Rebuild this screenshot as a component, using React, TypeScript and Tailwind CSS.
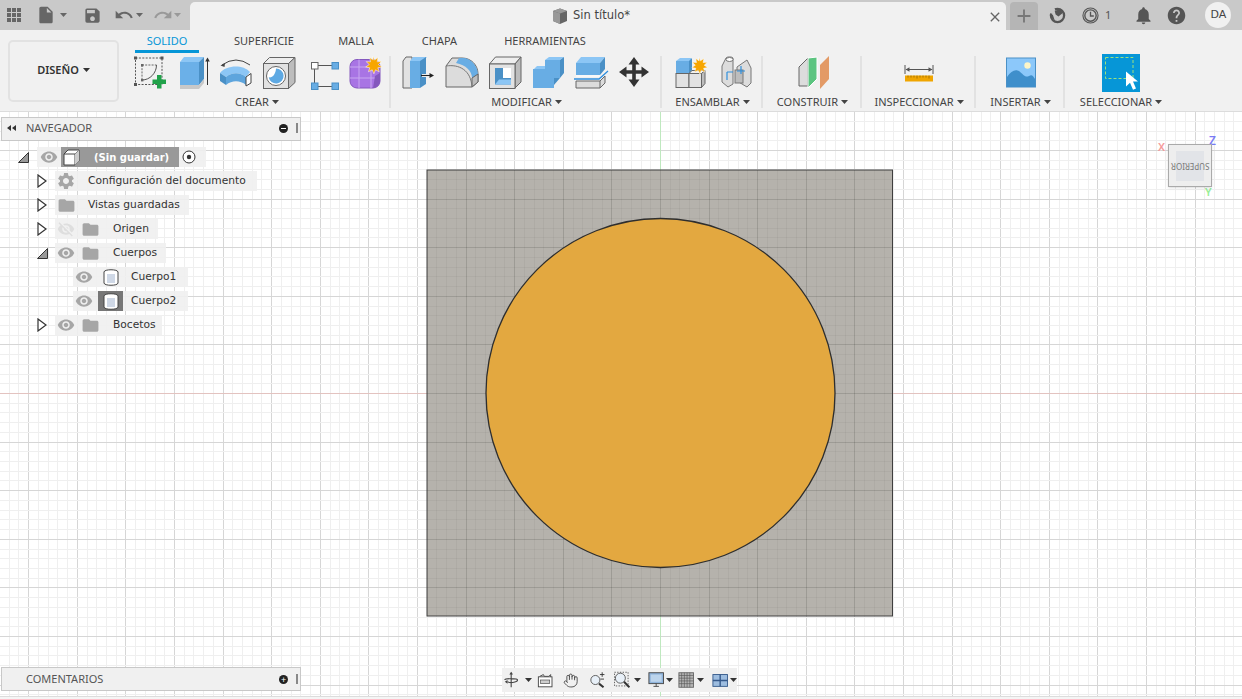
import type { ReactNode } from 'react'
import { Hand } from 'lucide-react'
import {
  MdAdd, MdClose, MdFolder, MdHelp, MdInsertDriveFile, MdNotifications, MdRedo, MdSave, MdSettings, MdUndo, MdVisibility, MdVisibilityOff,
} from 'react-icons/md'

const UI_FONT = 'font-["Noto_Sans",sans-serif]'
const TREE_FONT = 'font-["DejaVu_Sans",sans-serif]'

const CX = 660
const CY = 281 // axis origin inside the canvas (393 - 112)
const STEP = 9.72

function linesFrom(center: number, max: number) {
  const out: { pos: number; major: boolean }[] = []
  const first = -Math.ceil(center / STEP)
  const last = Math.ceil((max - center) / STEP)
  for (let i = first; i <= last; i++) {
    out.push({ pos: Math.round(center + i * STEP) + 0.5, major: i % 5 === 0 })
  }
  return out
}

function Canvas() {
  const xs = linesFrom(CX, 1242)
  const ys = linesFrom(CY, 584)
  return (
    <svg viewBox="0 0 1242 584" className="block w-full h-[584px]">
      <rect width="1242" height="584" fill="#ffffff" />
      {xs.map((l) => <line key={`x${l.pos}`} x1={l.pos} x2={l.pos} y1={0} y2={584} stroke={l.major ? '#d6d6d6' : '#efefef'} />)}
      {ys.map((l) => <line key={`y${l.pos}`} y1={l.pos} y2={l.pos} x1={0} x2={1242} stroke={l.major ? '#d6d6d6' : '#efefef'} />)}
      <line x1={0} x2={1242} y1={281.5} y2={281.5} stroke="#e3c3c0" />
      <line x1={660.5} x2={660.5} y1={0} y2={584} stroke="#bfe8bf" />
      <rect x={427} y={58} width={465.5} height={446} fill="#b5b2ac" />
      {xs.filter((l) => l.pos > 427 && l.pos < 892).map((l) => (
        <line key={`mx${l.pos}`} x1={l.pos} x2={l.pos} y1={58} y2={504} stroke="#000" strokeOpacity={l.major ? 0.13 : 0.035} />
      ))}
      {ys.filter((l) => l.pos > 58 && l.pos < 504).map((l) => (
        <line key={`my${l.pos}`} y1={l.pos} y2={l.pos} x1={427} x2={892} stroke="#000" strokeOpacity={l.major ? 0.13 : 0.035} />
      ))}
      <rect x={427} y={58} width={465.5} height={446} fill="none" stroke="#3f3f3f" />
      <circle cx={660.5} cy={281} r={174.5} fill="#e3a840" stroke="#2e2e2e" strokeWidth={1.3} />
    </svg>
  )
}

function Caret({ className = 'fill-[#444]' }: { className?: string }) {
  return <svg viewBox="0 0 7 4" className={`w-[7px] h-[4px] shrink-0 ${className}`}><path d="M0 0h7L3.5 4z" /></svg>
}

function Ico({ children, w = 36 }: { children: ReactNode; w?: number }) {
  return <svg viewBox={`0 0 ${w} ${w}`} width={w} height={w} className="shrink-0 block overflow-visible">{children}</svg>
}

function SketchIcon() {
  return (
    <Ico>
      <rect x="3.5" y="4" width="26.5" height="26.5" fill="none" stroke="#555" strokeDasharray="2 1.4" />
      {[[3.5, 4], [30, 4], [3.5, 30.5]].map(([x, y]) => <rect key={`${x}${y}`} x={x - 1.5} y={y - 1.5} width="3" height="3" fill="#555" />)}
      <path d="M10 11h14.5M10 11v15" stroke="#666" strokeDasharray="2 1.2" fill="none" />
      <path d="M24.5 11C24.5 19 18 26 10 26" stroke="#555" fill="none" />
      <rect x="9" y="10" width="2.4" height="2.4" fill="#666" />
      <rect x="9" y="25" width="2.4" height="2.4" fill="#666" />
      <path d="M25 21h4.5v4.5H34V30h-4.500v4.500H25V30h-4.500v-4.500H25z" fill="#21a24a" />
    </Ico>
  )
}

function ExtrudeIcon() {
  return (
    <Ico>
      <path d="M5 8l4-5h20l-5 5z" fill="#8cc6f5" />
      <rect x="5" y="8" width="19" height="23" fill="#6bb0e8" />
      <path d="M24 8l5-5v22l-5 6z" fill="#4a90c6" />
      <path d="M5 31h19l5-6v4l-5 6H5z" fill="#c8c8c8" />
      <path d="M32.500 31V6" stroke="#333" strokeWidth="1" />
      <path d="M32.500 3.500l2.300 4h-4.600z" fill="#333" />
    </Ico>
  )
}

function RevolveIcon() {
  return (
    <Ico>
      <path d="M4 11Q18 1 32 11" stroke="#444" fill="none" />
      <path d="M2.500 11.500l4.500-2.500-.5 4z" fill="#444" />
      <path d="M2 19C8 11 25 10 32 18L28 23C22 18 14 18 8 23Z" fill="#8cc6f5" />
      <path d="M2 19L8 23L8 31L2 27Z" fill="#4a90c6" />
      <path d="M8 23C14 18 22 18 28 23L28 31C22 26 14 26 8 31Z" fill="#5ea5dd" />
      <path d="M28 23L33 19.500V29L28 32Z" fill="#fff" stroke="#444" />
    </Ico>
  )
}

function HoleIcon() {
  return (
    <Ico>
      <path d="M2.500 9.500l6-6H34l-6.500 6z" fill="#eeeeee" stroke="#666" />
      <path d="M27.500 9.500L34 3.500v25l-6.500 6z" fill="#bdbdbd" stroke="#666" />
      <rect x="2.500" y="9.500" width="25" height="25" fill="#e2e2e2" stroke="#666" />
      <circle cx="15" cy="22" r="9.500" fill="#fff" stroke="#666" />
      <path d="M15 14.500a7.500 7.500 0 1 1-7.300 8.800c3.500 1 7-3 7.300-8.800z" fill="#5ea9e3" />
    </Ico>
  )
}

function PatternIcon() {
  return (
    <Ico>
      <path d="M14 11.500h14M10.500 15v14M14 32.500h14" stroke="#555" fill="none" />
      <rect x="7.500" y="8.500" width="6.500" height="6.500" fill="#fff" stroke="#666" />
      <rect x="28" y="8.500" width="6.500" height="6.500" fill="#68ade4" stroke="#4a90c6" />
      <rect x="7.500" y="29" width="6.500" height="6.500" fill="#68ade4" stroke="#4a90c6" />
      <rect x="28" y="29" width="6.500" height="6.500" fill="#68ade4" stroke="#4a90c6" />
    </Ico>
  )
}

function FormIcon() {
  return (
    <Ico>
      <rect x="3" y="5.500" width="30" height="28.500" rx="7" fill="#a874e4" stroke="#8458bd" />
      <path d="M3 13h30M3 24h30M12 5.500V34M24 13v21" stroke="#c9a8f1" fill="none" />
      <path d="M28 22l5-3v8c0 3-3 7-7 7z" fill="#8458bd" />
      <path d="M26 2l1.600 4 3.400-2.400-.8 4.200 4.300-.2-3.100 3 3.600 2.400-4.200.800 1.500 4-3.800-2-1.600 4-1.700-4-3.800 2 1.400-4-4.100-.8 3.500-2.400-3-3 4.300.2-.8-4.200 3.400 2.400z" fill="#f7a600" stroke="#fff" strokeWidth=".5" />
    </Ico>
  )
}

function PressPullIcon() {
  return (
    <Ico>
      <path d="M2 34V7l3-4h6v31z" fill="#e2e2e2" stroke="#666" />
      <path d="M9 7l3-4h14l-4 4z" fill="#8cc6f5" />
      <rect x="9" y="7" width="10" height="27" fill="#68ade4" />
      <path d="M19 7l6-4v27l-6 4z" fill="#4a90c6" />
      <path d="M21 21.500h8" stroke="#fff" strokeWidth="3" />
      <path d="M20 21.500h9" stroke="#222" strokeWidth="1.200" />
      <path d="M33 21.500l-4.500-2.600v5.200z" fill="#222" />
    </Ico>
  )
}

function FilletIcon() {
  return (
    <Ico>
      <path d="M2 33V12l6-8h10C27 4 34 11 34 20v8l-6 5z" fill="#dcdcdc" stroke="#666" />
      <path d="M15 4h4C27 4 34 12 34 21l-6 3C28 17 22 11 12 9z" fill="#68ade4" />
      <path d="M28 24l6-4v8l-6 5z" fill="#bdbdbd" stroke="#666" />
      <path d="M2 12C15 10 27 16 28 33" fill="none" stroke="#777" />
    </Ico>
  )
}

function ShellIcon() {
  return (
    <Ico>
      <path d="M2.500 10l6-7H34l-6 7z" fill="#eeeeee" stroke="#666" />
      <path d="M28 10l6-7v25l-6 6z" fill="#bdbdbd" stroke="#666" />
      <rect x="2.500" y="10" width="25.500" height="24.500" fill="#e2e2e2" stroke="#666" />
      <path d="M8 14h8v10h8v6.500H8z" fill="#4a90c6" />
      <path d="M16 14h8v10h-8z" fill="#fff" />
      <path d="M8 30.500l4-5h12v5z" fill="#8cc6f5" />
    </Ico>
  )
}

function CombineIcon() {
  return (
    <Ico>
      <path d="M3 16l4-4h9v11h-13z" fill="#8cc6f5" />
      <rect x="3" y="15" width="21" height="19" fill="#68ade4" />
      <path d="M15 6l4-3h15l-4 3z" fill="#8cc6f5" />
      <rect x="15" y="6" width="15" height="18" fill="#68ade4" />
      <path d="M30 6l4-3v16l-4 5zM24 24h6l-6 7z" fill="#4a90c6" />
      <path d="M24 24l-6 0v10l6-3z" fill="#68ade4" />
    </Ico>
  )
}

function SplitIcon() {
  return (
    <Ico>
      <path d="M3 9l5-6h24l-5 6z" fill="#8cc6f5" />
      <rect x="3" y="9" width="24" height="12" fill="#68ade4" />
      <path d="M27 9l5-6v12l-5 6z" fill="#4a90c6" />
      <path d="M1 25h25L35 17" stroke="#2f8fdd" strokeWidth="1.300" fill="none" />
      <path d="M3 27h24l5-5v7l-5 5H3z" fill="#dcdcdc" stroke="#666" />
      <path d="M27 27v7" stroke="#666" />
      <path d="M3 22h24" stroke="#fff" strokeWidth="1" />
    </Ico>
  )
}

function MoveIcon() {
  return (
    <Ico>
      <path d="M18 3l5.500 7.500h-3.700v5.700h5.700v-3.700L33 18l-7.500 5.500v-3.700h-5.700v5.700h3.700L18 33l-5.500-7.500h3.700v-5.700h-5.700v3.700L3 18l7.500-5.500v3.700h5.700v-5.700h-3.700z" fill="#333" />
    </Ico>
  )
}

function AssembleIcon() {
  return (
    <Ico>
      <path d="M3 7l4-3h11v15H3z" fill="#8cc6f5" />
      <rect x="3" y="7" width="13" height="12" fill="#68ade4" />
      <path d="M16 7l3-3v13l-3 3z" fill="#4a90c6" />
      <rect x="3" y="19.500" width="13" height="14" fill="#e2e2e2" stroke="#666" />
      <rect x="16" y="19.500" width="12.500" height="14" fill="#e2e2e2" stroke="#666" />
      <path d="M16 19.500l3-3h13l-3.500 3z" fill="#f0f0f0" stroke="#666" />
      <path d="M28.500 19.500l3.500-3v13l-3.500 4z" fill="#bdbdbd" stroke="#666" />
      <path d="M26 3l1.500 3.800 3.400-2.300-.8 4 4.200-.2-3.100 2.900 3.500 2.300-4.100.8 1.400 3.900-3.700-2-1.400 3.900-1.700-3.900-3.600 2 1.200-3.900-4-.8 3.500-2.300-3-2.900 4.200.2-.8-4 3.400 2.300z" fill="#f7a600" stroke="#fff" strokeWidth=".5" />
    </Ico>
  )
}

function JointIcon() {
  return (
    <Ico>
      <path d="M5 12l4-8c1-1.500 6-1.500 7 0v26l-5 3-6-5z" fill="#dcdcdc" stroke="#777" />
      <ellipse cx="12.500" cy="5.500" rx="3.500" ry="2" fill="#fff" stroke="#777" />
      <path d="M20 13l10-7 4 8v15l-4 4-10-6z" fill="#dcdcdc" stroke="#777" />
      <rect x="18" y="16" width="8" height="13" fill="#bdbdbd" stroke="#777" />
      <path d="M10 18v8M10 18h6M24 12v8M20 17h8" stroke="#2f8fdd" strokeWidth="1.200" fill="none" />
    </Ico>
  )
}

function ConstructIcon() {
  return (
    <Ico>
      <g transform="translate(3)">
        <path d="M1 13l9-9v28H1z" fill="#dcdcdc" stroke="#666" />
        <path d="M10 4l9-1v22l-9 9z" fill="#5cc480" stroke="#fff" />
        <path d="M22 11l9-9v23l-9 10z" fill="#e39a66" />
      </g>
    </Ico>
  )
}

function InspectIcon() {
  return (
    <Ico>
      <path d="M4 11v9M32 11v9" stroke="#555" />
      <path d="M5 15.500h26" stroke="#555" />
      <path d="M4.500 15.500l4-2.200v4.400zM31.500 15.500l-4-2.200v4.400z" fill="#555" />
      <rect x="4" y="21.500" width="28" height="6" fill="#f0a500" />
      <path d="M7 21.500v2M10 21.500v2M13 21.500v2M16 21.500v3M19 21.500v2M22 21.500v2M25 21.500v2M28 21.500v3" stroke="#8a6000" strokeWidth=".7" />
    </Ico>
  )
}

function InsertIcon() {
  return (
    <Ico>
      <rect x="3.500" y="4" width="29" height="29" fill="#8cc8fa" stroke="#4a90c6" />
      <path d="M4 33V23c4-6 8-8 12-6 4 3 6 7 10 5 3-2 4 0 6 3v8z" fill="#3f8fcb" />
      <circle cx="24.500" cy="11.500" r="3.200" fill="#fdf5c8" />
    </Ico>
  )
}

function SelectIcon() {
  return (
    <Ico w={38}>
      <rect width="38" height="38" fill="#0696d7" />
      <rect x="3.500" y="3.500" width="27.500" height="21" fill="none" stroke="#9ee27c" strokeDasharray="3 2" />
      <path d="M24 17.500v15l4-3.700 3 7 3-1.200-3-7h5z" fill="#fff" />
    </Ico>
  )
}

const GROUPS: { label: string; width: string; gap: string; icons: ReactNode[] }[] = [
  { label: 'CREAR', width: 'w-[268px]', gap: 'gap-[7px]', icons: [<SketchIcon key="a" />, <ExtrudeIcon key="b" />, <RevolveIcon key="c" />, <HoleIcon key="d" />, <PatternIcon key="e" />, <FormIcon key="f" />] },
  { label: 'MODIFICAR', width: 'w-[271px]', gap: 'gap-[7px]', icons: [<PressPullIcon key="a" />, <FilletIcon key="b" />, <ShellIcon key="c" />, <CombineIcon key="d" />, <SplitIcon key="e" />, <MoveIcon key="f" />] },
  { label: 'ENSAMBLAR', width: 'w-[101px]', gap: 'gap-[8px]', icons: [<AssembleIcon key="a" />, <JointIcon key="b" />] },
  { label: 'CONSTRUIR', width: 'w-[99px]', gap: 'gap-0', icons: [<ConstructIcon key="a" />] },
  { label: 'INSPECCIONAR', width: 'w-[114px]', gap: 'gap-0', icons: [<InspectIcon key="a" />] },
  { label: 'INSERTAR', width: 'w-[89px]', gap: 'gap-0', icons: [<InsertIcon key="a" />] },
  { label: 'SELECCIONAR', width: 'w-[112px]', gap: 'gap-0', icons: [<SelectIcon key="a" />] },
]

const TABS = [
  { label: 'SOLIDO', active: true, cls: 'w-[64px] ml-[12px]' },
  { label: 'SUPERFICIE', cls: 'w-[58px] ml-[36px]' },
  { label: 'MALLA', cls: 'w-[36px] ml-[45px]' },
  { label: 'CHAPA', cls: 'w-[37px] ml-[47px]' },
  { label: 'HERRAMIENTAS', cls: 'w-[82px] ml-[46px]' },
]

function TopBar() {
  return (
    <div className="h-[30px] bg-[#c9c9c9] flex">
      <div className="w-[190px] shrink-0 flex items-center text-[#666]">
        <svg viewBox="0 0 14 14" className="w-[14px] h-[14px] ml-[7px] fill-[#666]">
          {[0, 5, 10].map((x) => [0, 5, 10].map((y) => <rect key={`${x}-${y}`} x={x} y={y} width="4" height="4" />))}
        </svg>
        <MdInsertDriveFile className="w-[20px] h-[20px] ml-[15px]" />
        <Caret className="fill-[#666] ml-[4px]" />
        <MdSave className="w-[19px] h-[19px] ml-[16px]" />
        <MdUndo className="w-[20px] h-[20px] ml-[12px]" />
        <Caret className="fill-[#666] ml-[2px]" />
        <MdRedo className="w-[20px] h-[20px] ml-[10px] text-[#999]" />
        <Caret className="fill-[#999] ml-[1px]" />
      </div>
      <div className="mt-[2px] w-[816px] shrink-0 bg-[#f1f1f1] rounded-t-[5px] flex items-center justify-center pr-[14px] relative">
        <svg viewBox="0 0 16 16" className="w-[16px] h-[16px] mr-[5px]">
          <path d="M1 3l7-2.500L15 3v10l-7 3-7-3z" fill="#666" />
          <path d="M1 3l7 2.500L15 3 8 .5z" fill="#999" />
          <path d="M1 3l7 2.500V16l-7-3z" fill="#999" />
        </svg>
        <span className={`${TREE_FONT} text-[11.5px] text-[#444]`}>Sin título*</span>
        <MdClose className="absolute right-[3px] top-[7px] w-[16px] h-[16px] text-[#666]" />
      </div>
      <div className="mt-[2px] ml-[4px] w-[28px] shrink-0 bg-[#b5b5b5] rounded-t-[4px] flex items-center justify-center">
        <MdAdd className="w-[22px] h-[22px] text-[#777]" />
      </div>
      <div className="flex items-center text-[#555]">
        <svg viewBox="0 0 18 18" className="w-[17px] h-[17px] ml-[11px]">
          <circle cx="9" cy="9" r="7" fill="none" stroke="#555" strokeWidth="2.400" strokeDasharray="24 6" />
          <path d="M6 4l7-2 1 5-4 3-3-2zM1 10l3-2 2 6z" fill="#555" />
        </svg>
        <svg viewBox="0 0 18 18" className="w-[17px] h-[17px] ml-[16px]">
          <circle cx="9" cy="9" r="8" fill="#c9c9c9" stroke="#555" strokeWidth="1.200" />
          <circle cx="9" cy="9" r="6" fill="none" stroke="#555" strokeWidth="1.500" />
          <path d="M9 5v4.500h3.500" fill="none" stroke="#555" strokeWidth="1.400" />
        </svg>
        <span className={`${UI_FONT} text-[11px] ml-[6px] mr-[22px]`}>1</span>
        <MdNotifications className="w-[21px] h-[21px]" />
        <MdHelp className="w-[21px] h-[21px] ml-[12px]" />
        <span className={`${TREE_FONT} ml-[18px] w-[26px] h-[26px] rounded-full bg-[#f0f0f0] flex items-center justify-center text-[11px] text-[#444]`}>DA</span>
      </div>
    </div>
  )
}

function Toolbar() {
  return (
    <div className={`${UI_FONT} h-[82px] bg-[#f1f1f1] border-b border-[#dcdcdc] flex`}>
      <div className="w-[123px] shrink-0 pl-[8px] pt-[10px]">
        <button className="w-[111px] h-[62px] pb-[2px] rounded-[5px] border-2 border-[#e2e2e2] flex items-center justify-center gap-[4px] text-[11px] font-semibold text-[#333]">
          DISEÑO <Caret className="fill-[#333]" />
        </button>
      </div>
      <div className="flex flex-col">
        <div className="h-[24px] flex text-[11px] text-[#444]">
          {TABS.map((t) => (
            <div key={t.label} className={`${t.cls} h-[23px] flex justify-center pt-[3px] leading-[16px] whitespace-nowrap ${t.active ? 'text-[#0696d7] border-b-[3px] border-[#0696d7]' : ''}`}>
              {t.label}
            </div>
          ))}
        </div>
        <div className="flex">
          {GROUPS.map((g, i) => (
            <div key={g.label} className={`${g.width} h-[57px] flex flex-col items-center relative`}>
              <div className={`h-[36px] flex ${g.gap}`}>{g.icons}</div>
              <div className="mt-[6px] h-[12px] flex items-center gap-[3px] text-[11px] text-[#444] leading-[12px] whitespace-nowrap">
                {g.label} <Caret />
              </div>
              {i < GROUPS.length - 1 && <div className="absolute right-0 top-[2px] w-[2px] h-[52px] bg-[#e2e2e2]" />}
            </div>
          ))}
        </div>
      </div>
    </div>
  )
}

function Closed() {
  return (
    <svg viewBox="0 0 10 14" className="w-[10px] h-[14px] shrink-0">
      <path d="M1 1l8 6-8 6z" fill="#fff" stroke="#333" strokeWidth="1.200" />
    </svg>
  )
}

function Open() {
  return (
    <svg viewBox="0 0 11 11" className="w-[11px] h-[11px] shrink-0">
      <path d="M10.500.5v10H.5z" fill="#999" stroke="#333" />
    </svg>
  )
}

function BodyIcon({ selected }: { selected?: boolean }) {
  return (
    <div className={`w-[25px] h-[20px] flex items-center justify-center ${selected ? 'bg-[#777]' : ''}`}>
      <svg viewBox="0 0 16 17" className="w-[16px] h-[17px]">
        <path d="M1 3c0-3 14-3 14 0v11c0 3-14 3-14 0z" fill="#fff" stroke="#444" />
        <path d="M4 5h8v9H4z" fill="#cfd8e6" />
      </svg>
    </div>
  )
}

const Eye = () => <MdVisibility className="w-[18px] h-[18px] text-[#a6a6a6] shrink-0" />
const Folder = () => <MdFolder className="w-[19px] h-[19px] text-[#a6a6a6] shrink-0" />

function Row({ indent, toggle, bg, children }: { indent: string; toggle: ReactNode; bg: string; children: ReactNode }) {
  return (
    <div className={`h-[24px] flex items-center ${indent}`}>
      <div className="w-[18px] shrink-0">{toggle}</div>
      <div className={`${bg} h-[20px] flex items-center bg-[#f0f0f0]/90 text-[10.7px] text-[#333] whitespace-nowrap`}>{children}</div>
    </div>
  )
}

function Browser() {
  return (
    <div className={`${TREE_FONT} absolute left-0 top-[5px] w-[301px]`}>
      <div className={`${UI_FONT} ml-px h-[24px] pb-[2px] border border-[#c8c8c8] bg-[#f0f0f0] flex items-center text-[11px] text-[#555]`}>
        <svg viewBox="0 0 9 6" className="w-[9px] h-[6px] ml-[5px] fill-[#333]"><path d="M4 0v6L0 3zM9 0v6L5 3z" /></svg>
        <span className="ml-[10px] flex-1">NAVEGADOR</span>
        <span className="w-[9px] h-[9px] rounded-full bg-[#222] flex items-center justify-center mr-[8px]"><span className="w-[5px] h-px bg-white" /></span>
        <span className="w-[2px] h-[10px] border-x border-[#888] mr-[2px]" />
      </div>
      <div className="mt-[4px]">
        <Row indent="pl-[18px]" toggle={<Open />} bg="w-[169px] ml-px">
          <span className="w-[24px] flex justify-center"><Eye /></span>
          <div className="w-[118px] h-[20px] bg-[#999] flex items-center">
            <svg viewBox="0 0 19 19" className="w-[19px] h-[19px] ml-px shrink-0">
              <path d="M2 6l4-4h11v11l-4 4H2z" fill="#fff" stroke="#444" />
              <path d="M2 6h11v11M13 6l4-4" fill="none" stroke="#444" />
              <path d="M13 6l4-4v11l-4 4z" fill="#ccc" />
            </svg>
            <span className="ml-[13px] text-[10px] font-bold text-white">(Sin guardar)</span>
          </div>
          <svg viewBox="0 0 14 14" className="w-[14px] h-[14px] ml-[3px]">
            <circle cx="7" cy="7" r="6" fill="#fff" stroke="#333" />
            <circle cx="7" cy="7" r="2.200" fill="#333" />
          </svg>
        </Row>
        <Row indent="pl-[37px]" toggle={<Closed />} bg="w-[202px]">
          <MdSettings className="w-[20px] h-[20px] text-[#a6a6a6] ml-[1px] shrink-0" />
          <span className="ml-[12px]">Configuración del documento</span>
        </Row>
        <Row indent="pl-[37px]" toggle={<Closed />} bg="w-[134px]">
          <span className="ml-[2px]"><Folder /></span>
          <span className="ml-[12px]">Vistas guardadas</span>
        </Row>
        <Row indent="pl-[37px]" toggle={<Closed />} bg="w-[103px]">
          <MdVisibilityOff className="w-[18px] h-[18px] text-[#dedede] ml-[2px] shrink-0" />
          <span className="ml-[6px]"><Folder /></span>
          <span className="ml-[13px]">Origen</span>
        </Row>
        <Row indent="pl-[37px]" toggle={<Open />} bg="w-[111px]">
          <span className="ml-[2px]"><Eye /></span>
          <span className="ml-[6px]"><Folder /></span>
          <span className="ml-[13px]">Cuerpos</span>
        </Row>
        <Row indent="pl-[55px]" toggle={null} bg="w-[115px]">
          <span className="ml-[2px]"><Eye /></span>
          <span className="ml-[5px]"><BodyIcon /></span>
          <span className="ml-[8px]">Cuerpo1</span>
        </Row>
        <Row indent="pl-[55px]" toggle={null} bg="w-[115px]">
          <span className="ml-[2px]"><Eye /></span>
          <span className="ml-[5px]"><BodyIcon selected /></span>
          <span className="ml-[8px]">Cuerpo2</span>
        </Row>
        <Row indent="pl-[37px]" toggle={<Closed />} bg="w-[107px]">
          <span className="ml-[2px]"><Eye /></span>
          <span className="ml-[6px]"><Folder /></span>
          <span className="ml-[13px]">Bocetos</span>
        </Row>
      </div>
    </div>
  )
}

function ViewCube() {
  return (
    <div className={`${UI_FONT} absolute left-[1155px] top-[24px] w-[66px] h-[64px]`}>
      <span className="absolute left-[3px] top-[4px] text-[11px] leading-[14px] font-semibold text-[#f59a9a]">X</span>
      <span className="absolute left-[54px] top-[-2px] text-[12px] leading-[14px] font-semibold text-[#7a7af5]">Z</span>
      <span className="absolute left-[50px] top-[49px] text-[11px] leading-[14px] font-semibold text-[#98ef98]">Y</span>
      <div className="absolute left-[13px] top-[8px] w-[44px] h-[43px] border border-[#aaaaaa] bg-[#eeeeee] flex items-center justify-center shadow-sm">
        <div className="w-[28px] h-[30px] bg-[#e2e4e8] flex items-center justify-center">
          <span className="rotate-180 text-[8px] text-[#777] whitespace-nowrap">SUPERIOR</span>
        </div>
      </div>
    </div>
  )
}

function NavBar() {
  const stroke = '#444'
  return (
    <div className="absolute left-[502px] top-[556px] w-[235px] h-[24px] bg-[#f0f0f0] flex items-center">
      <svg viewBox="0 0 18 18" className="w-[18px] h-[18px] ml-[1px]">
        <path d="M9 1v16M2 9c0-2 14-2 14 0s-7 4-11 2" fill="none" stroke={stroke} strokeWidth="1.200" />
        <path d="M9 0l2 3H7zM2 11l3-2 0 4z" fill={stroke} />
      </svg>
      <Caret className="fill-[#333] ml-[6px]" />
      <svg viewBox="0 0 18 18" className="w-[18px] h-[18px] ml-[5px]">
        <path d="M3 5l4-2 1 2h5l2-2v3" fill="none" stroke={stroke} />
        <rect x="1.500" y="5.500" width="15" height="11" fill="#fff" stroke={stroke} />
        <rect x="4" y="9" width="10" height="4" fill="#cfcfcf" stroke={stroke} strokeWidth=".7" />
      </svg>
      <Hand className="w-[17px] h-[17px] ml-[9px] text-[#444]" strokeWidth={1.4} />
      <svg viewBox="0 0 18 18" className="w-[18px] h-[18px] ml-[11px]">
        <circle cx="7" cy="9" r="5" fill="#e8f0f8" stroke="#555" />
        <path d="M11 13l5 4" stroke="#333" strokeWidth="2.200" />
        <path d="M12 3h5M14.500 .5v5M12.500 8h4" stroke="#333" />
      </svg>
      <svg viewBox="0 0 18 18" className="w-[18px] h-[18px] ml-[8px]">
        <rect x=".5" y=".5" width="15" height="15" fill="none" stroke="#555" strokeDasharray="1.500 1.500" />
        <circle cx="7" cy="7" r="5.500" fill="#e8f0f8" stroke="#555" />
        <path d="M11 11l6 6" stroke="#333" strokeWidth="2.200" />
      </svg>
      <Caret className="fill-[#333] ml-[4px]" />
      <svg viewBox="0 0 18 18" className="w-[18px] h-[18px] ml-[7px]">
        <rect x="1" y="1" width="16" height="12" fill="#8fb4dc" stroke="#444" />
        <rect x="3" y="3" width="12" height="8" fill="#bcd4ec" />
        <path d="M6 16h6M9 13v3" stroke="#444" />
      </svg>
      <Caret className="fill-[#333] ml-[2px]" />
      <svg viewBox="0 0 18 18" className="w-[18px] h-[18px] ml-[5px]">
        <rect x="1" y="1" width="16" height="16" fill="#b5b5b5" stroke="#666" />
        <path d="M4 1v16M7 1v16M10 1v16M13 1v16M1 4h16M1 7h16M1 10h16M1 13h16" stroke="#555" strokeWidth=".7" />
      </svg>
      <Caret className="fill-[#333] ml-[2px]" />
      <svg viewBox="0 0 18 18" className="w-[18px] h-[18px] ml-[8px]">
        <rect x="1" y="3" width="16" height="13" fill="#9dbde0" stroke="#35598a" />
        <path d="M9 3v13M1 9.500h16" stroke="#35598a" strokeWidth="1.500" />
      </svg>
      <Caret className="fill-[#333] ml-[2px]" />
    </div>
  )
}

export default function App() {
  return (
    <div className="w-[1242px] h-[699px] overflow-hidden bg-white">
      <TopBar />
      <Toolbar />
      <div className="relative h-[584px]">
        <Canvas />
        <Browser />
        <ViewCube />
        <div className={`${UI_FONT} absolute left-px top-[555px] w-[300px] h-[24px] border border-[#c8c8c8] bg-[#f0f0f0] flex items-center text-[11px] text-[#555]`}>
          <span className="ml-[24px] flex-1">COMENTARIOS</span>
          <span className="w-[9px] h-[9px] rounded-full bg-[#222] flex items-center justify-center mr-[8px] text-[9px] leading-none text-white">+</span>
          <span className="w-[2px] h-[10px] border-x border-[#888] mr-[2px]" />
        </div>
        <NavBar />
      </div>
      <div className="h-[3px] border-t border-[#dcdcdc] bg-[#f5f5f5]" />
    </div>
  )
}
